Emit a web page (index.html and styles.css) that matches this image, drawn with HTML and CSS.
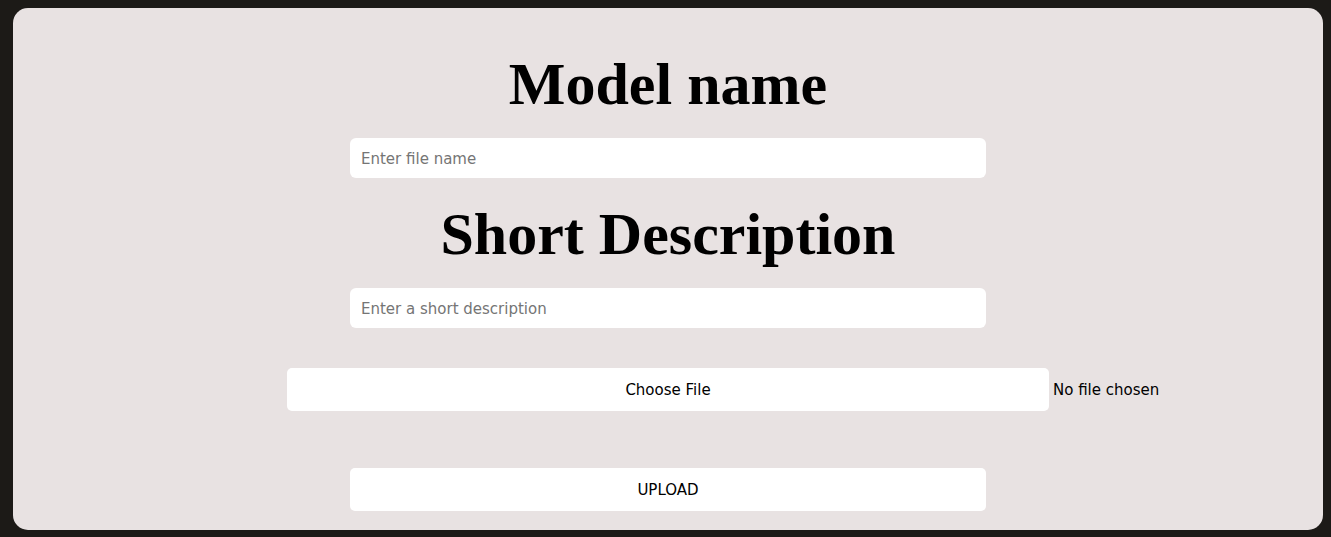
FILE: index.html
```html
<!DOCTYPE html>
<html>
<head>
<meta charset="utf-8">
<link rel="stylesheet" href="styles.css">
</head>
<body>
<div class="card">
  <h1 class="title">Model name</h1>
  <input class="field" type="text" placeholder="Enter file name">
  <h1 class="title title-second">Short Description</h1>
  <input class="field" type="text" placeholder="Enter a short description">
  <div class="file-row">
    <span class="file-spacer"></span>
    <button class="file-btn" type="button">Choose File</button>
    <span class="file-status">No file chosen</span>
  </div>
  <button class="upload" type="button">UPLOAD</button>
</div>
</body>
</html>
```

FILE: styles.css
```css
html, body {
  margin: 0;
  padding: 0;
  background: #1c1a17;
  height: 100%;
}
body {
  padding: 8px 8px 7px 13px;
  box-sizing: border-box;
  font-family: "DejaVu Sans", Verdana, sans-serif;
}
.card {
  background: #e8e2e2;
  border-radius: 15px;
  width: 1310px;
  height: 522px;
  box-sizing: border-box;
  padding-top: 42px;
  display: flex;
  flex-direction: column;
  align-items: center;
}
.title {
  font-family: "Liberation Serif", "Times New Roman", serif;
  font-weight: bold;
  font-size: 60px;
  line-height: 69px;
  margin: 0 0 19px 0;
  color: #000;
}
.title-second {
  margin-top: 22px;
}
.field {
  width: 636px;
  height: 40px;
  box-sizing: border-box;
  border: none;
  border-radius: 6px;
  background: #fff;
  padding: 2px 11px 0 11px;
  font-family: "DejaVu Sans", Verdana, sans-serif;
  font-size: 15px;
  color: #000;
  outline: none;
}
.field::placeholder {
  color: #757575;
}
.file-row {
  margin-top: 40px;
  width: 100%;
  display: grid;
  grid-template-columns: 1fr 762px 1fr;
  column-gap: 4px;
  align-items: center;
}
.file-btn, .upload {
  height: 43px;
  border: none;
  border-radius: 5px;
  background: #fff;
  font-family: "DejaVu Sans", Verdana, sans-serif;
  font-size: 15px;
  color: #000;
  padding: 0;
}
.file-status {
  font-size: 15px;
  color: #000;
}
.upload {
  margin-top: 57px;
  width: 636px;
}
```
